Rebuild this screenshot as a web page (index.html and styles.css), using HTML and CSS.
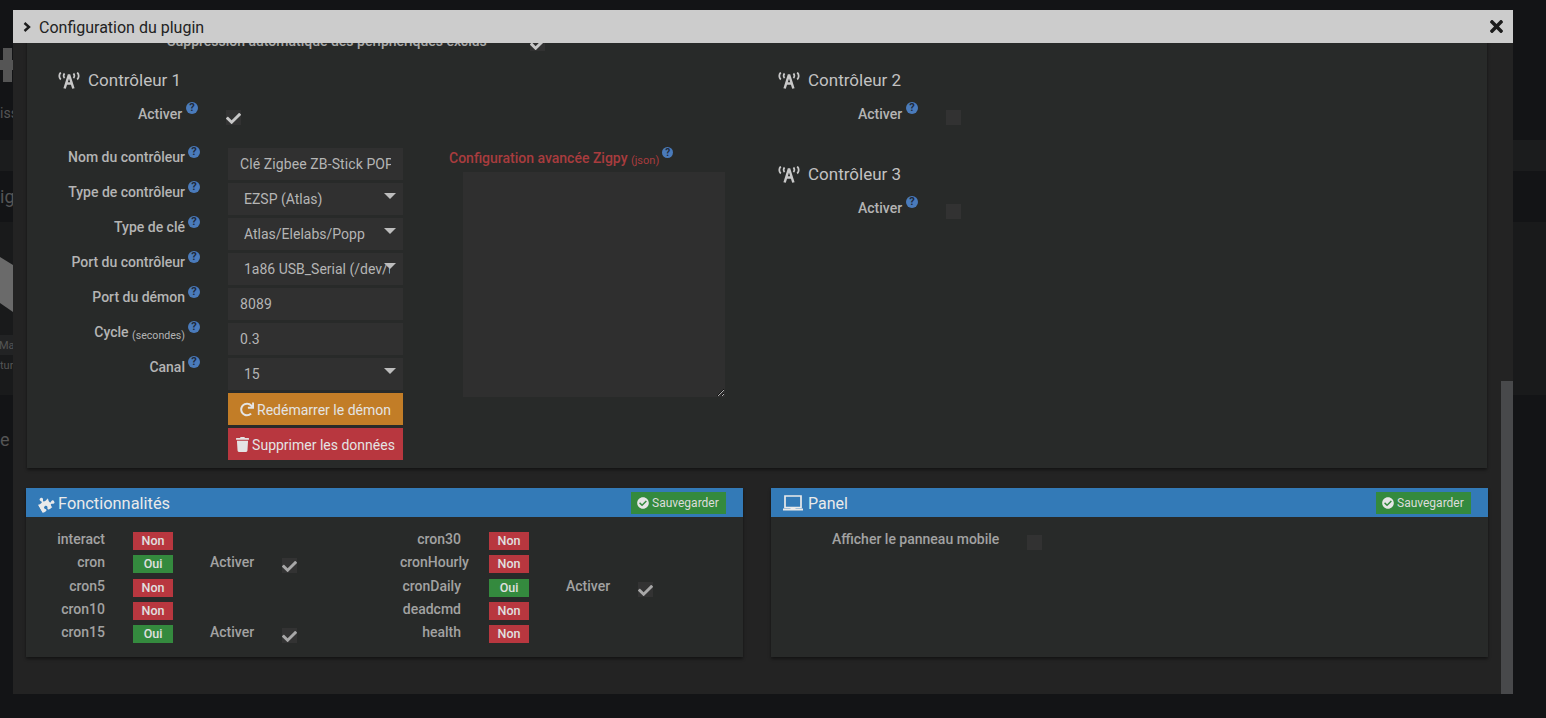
FILE: index.html
```html
<!DOCTYPE html>
<html lang="fr">
<head>
<meta charset="utf-8">
<title>Configuration du plugin</title>
<link rel="stylesheet" href="styles.css">
</head>
<body>
<svg class="defs" aria-hidden="true">
  <symbol id="i-check" viewBox="0 0 512 512"><path d="M173.898 439.404l-166.4-166.4c-9.997-9.997-9.997-26.206 0-36.204l36.203-36.204c9.997-9.998 26.207-9.998 36.204 0L192 312.69 432.095 72.596c9.997-9.997 26.207-9.997 36.204 0l36.203 36.204c9.997 9.997 9.997 26.206 0 36.204l-294.4 294.401c-9.998 9.997-26.207 9.997-36.204-.001z"/></symbol>
  <symbol id="i-ok" viewBox="0 0 512 512"><path d="M504 256c0 136.967-111.033 248-248 248S8 392.967 8 256 119.033 8 256 8s248 111.033 248 248zM227.314 387.314l184-184c6.248-6.248 6.248-16.379 0-22.627l-22.627-22.627c-6.248-6.249-16.379-6.249-22.628 0L216 308.118l-70.059-70.059c-6.248-6.248-16.379-6.248-22.628 0l-22.627 22.627c-6.248 6.248-6.248 16.379 0 22.627l104 104c6.249 6.249 16.379 6.249 22.628.001z"/></symbol>
  <symbol id="i-tower" viewBox="0 0 22 17">
    <path d="M11 2.500 6.600 16.500M11 2.500l4.400 14M8 11.500h6" fill="none" stroke="currentColor" stroke-width="2.500"/>
    <path d="M2.800 .5C.8 2.300.8 5.700 2.800 7.500M6.600 1.500C5.300 2.700 5.300 4.700 6.600 6M19.200 .5c2 1.800 2 5.200 0 7M15.400 1.500c1.300 1.200 1.300 3.200 0 4.500" fill="none" stroke="currentColor" stroke-width="1.800"/>
  </symbol>
</svg>

<div class="page">
  <svg class="bg-plus" viewBox="0 0 13 34"><path d="M3 0h9v12h1v10h-1v12H3V22H0V12h3z"/></svg>
  <div class="bg-text bg-iss">iss</div>
  <div class="bg-band bg-band-a"></div>
  <div class="bg-text bg-big bg-ig">ig</div>
  <div class="bg-band bg-band-b">
    <svg class="bg-device" viewBox="0 0 13 57"><path d="M0 0 13 8V55L0 46z"/></svg>
    <div class="bg-text bg-cap">Mai</div>
    <div class="bg-text bg-tur">tur</div>
  </div>
  <div class="bg-text bg-big bg-e">e</div>
</div>

<section class="modal">
  <header class="modal-head">
    <svg class="chev" viewBox="0 0 8 10"><path d="M1.500 1 6 5 1.500 9" fill="none" stroke="currentColor" stroke-width="2.400"/></svg>
    <span class="modal-title">Configuration du plugin</span>
    <svg class="close" viewBox="0 0 352 512"><path d="M242.72 256l100.07-100.07c12.28-12.28 12.28-32.19 0-44.48l-22.24-22.24c-12.28-12.28-32.19-12.28-44.48 0L176 189.28 75.93 89.21c-12.28-12.28-32.19-12.28-44.48 0L9.21 111.45c-12.28 12.28-12.28 32.19 0 44.48L109.28 256 9.21 356.07c-12.28 12.28-12.28 32.19 0 44.48l22.24 22.24c12.28 12.28 32.2 12.28 44.48 0L176 322.72l100.07 100.07c12.28 12.28 32.2 12.28 44.48 0l22.24-22.24c12.28-12.28 12.28-32.19 0-44.48L242.72 256z"/></svg>
  </header>
  <div class="modal-body">
    <div class="scroller">
      <div class="panel-main">
        <div class="clipped-row">
          <span class="clipped-label">Suppression automatique des périphériques exclus</span>
          <span class="check on"><svg><use href="#i-check"/></svg></span>
        </div>
        <div class="controllers">
          <div class="ctrl-left">
            <h3 class="ctrl-title"><svg class="tower"><use href="#i-tower"/></svg>Contrôleur 1</h3>
            <div class="act-row act-row-1">
              <span class="act-label">Activer</span><span class="help">?</span>
              <span class="check on"><svg><use href="#i-check"/></svg></span>
            </div>
            <div class="form">
              <div class="rows">
                <div class="row"><span class="lbl">Nom du contrôleur<span class="help">?</span></span>
                  <input class="field field-text" type="text" value="Clé Zigbee ZB-Stick POPP"></div>
                <div class="row"><span class="lbl">Type de contrôleur<span class="help">?</span></span>
                  <span class="sel"><select class="field"><option>EZSP (Atlas)</option></select></span></div>
                <div class="row"><span class="lbl">Type de clé<span class="help">?</span></span>
                  <span class="sel"><select class="field"><option>Atlas/Elelabs/Popp</option></select></span></div>
                <div class="row"><span class="lbl">Port du contrôleur<span class="help">?</span></span>
                  <span class="sel"><select class="field"><option>1a86 USB_Serial (/dev/ttyUSB0)</option></select></span></div>
                <div class="row"><span class="lbl">Port du démon<span class="help">?</span></span>
                  <input class="field field-text" type="text" value="8089"></div>
                <div class="row"><span class="lbl">Cycle <small class="lbl-small">(secondes)</small><span class="help">?</span></span>
                  <input class="field field-text" type="text" value="0.3"></div>
                <div class="row"><span class="lbl">Canal<span class="help">?</span></span>
                  <span class="sel"><select class="field"><option>15</option></select></span></div>
                <div class="row"><span class="lbl"></span>
                  <button class="btn btn-warn" type="button"><svg class="btn-ico btn-ico-redo" viewBox="0 0 512 512"><path d="M500.33 0h-47.41a12 12 0 0 0-12 12.57l4 82.76A247.42 247.42 0 0 0 256 8C119.34 8 8.05 119.53 8 256.19 7.95 393.07 119 504 256 504a247.1 247.1 0 0 0 166.18-63.91 12 12 0 0 0 .48-17.43l-34-34a12 12 0 0 0-16.38-.55A176 176 0 1 1 402.1 157.8l-101.53-4.87a12 12 0 0 0-12.57 12v47.41a12 12 0 0 0 12 12h200.33a12 12 0 0 0 12-12V12a12 12 0 0 0-12-12z"/></svg><span class="btn-text">Redémarrer le démon</span></button></div>
                <div class="row"><span class="lbl"></span>
                  <button class="btn btn-danger" type="button"><svg class="btn-ico" viewBox="0 0 448 512"><path d="M432 32H312l-9.400-18.700A24 24 0 0 0 281.100 0H166.800a23.720 23.720 0 0 0-21.400 13.300L136 32H16A16 16 0 0 0 0 48v32a16 16 0 0 0 16 16h416a16 16 0 0 0 16-16V48a16 16 0 0 0-16-16zM53.200 467a48 48 0 0 0 47.900 45h245.800a48 48 0 0 0 47.900-45L416 128H32z"/></svg><span class="btn-text">Supprimer les données</span></button></div>
              </div>
              <div class="adv">
                <div class="adv-label">Configuration avancée Zigpy <small class="adv-small">(json)</small><span class="help">?</span></div>
                <textarea class="adv-area"></textarea>
              </div>
            </div>
          </div>
          <div class="ctrl-right">
            <div class="ctrl-block">
              <h3 class="ctrl-title"><svg class="tower"><use href="#i-tower"/></svg>Contrôleur 2</h3>
              <div class="act-row">
                <span class="act-label">Activer</span><span class="help">?</span>
                <span class="check"></span>
              </div>
            </div>
            <div class="ctrl-block">
              <h3 class="ctrl-title"><svg class="tower"><use href="#i-tower"/></svg>Contrôleur 3</h3>
              <div class="act-row">
                <span class="act-label">Activer</span><span class="help">?</span>
                <span class="check"></span>
              </div>
            </div>
          </div>
        </div>
      </div>

      <div class="cards">
        <div class="card">
          <div class="card-head">
            <svg class="card-ico card-ico-puzzle" viewBox="0 0 576 512"><path d="M519.442 288.651c-41.519 0-59.5 31.593-82.058 31.593C377.409 320.244 432 144 432 144s-196.288 80-196.288-3.297c0-35.827 36.288-46.25 36.288-85.985C272 19.216 243.885 0 210.539 0c-34.654 0-66.366 18.891-66.366 56.346 0 41.364 31.711 59.277 31.711 81.75C175.885 207.719 0 166.758 0 166.758v333.237s178.635 41.047 178.635-28.662c0-22.473-40-40.107-40-81.471 0-37.456 29.25-56.346 63.577-56.346 33.673 0 61.788 19.216 61.788 54.717 0 39.735-36.288 50.158-36.288 85.985 0 60.803 129.675 25.73 181.23 25.73 0 0-34.725-120.101 25.827-120.101 35.962 0 46.423 36.152 86.308 36.152C556.712 416 576 387.99 576 354.443c0-34.199-18.962-65.792-56.558-65.792z"/></svg>
            <span class="card-title card-title-wide">Fonctionnalités</span>
            <button class="save" type="button"><svg class="save-ico"><use href="#i-ok"/></svg>Sauvegarder</button>
          </div>
          <div class="card-body">
            <div class="frow">
              <div class="fcell"><span class="fname">interact</span><span class="badge no">Non</span></div>
              <div class="fcell"><span class="fname">cron30</span><span class="badge no">Non</span></div>
            </div>
            <div class="frow frow-tall">
              <div class="fcell"><span class="fname">cron</span><span class="badge yes">Oui</span><span class="fact">Activer</span><span class="check on dim"><svg><use href="#i-check"/></svg></span></div>
              <div class="fcell"><span class="fname">cronHourly</span><span class="badge no">Non</span></div>
            </div>
            <div class="frow">
              <div class="fcell"><span class="fname">cron5</span><span class="badge no">Non</span></div>
              <div class="fcell"><span class="fname">cronDaily</span><span class="badge yes">Oui</span><span class="fact">Activer</span><span class="check on dim"><svg><use href="#i-check"/></svg></span></div>
            </div>
            <div class="frow">
              <div class="fcell"><span class="fname">cron10</span><span class="badge no">Non</span></div>
              <div class="fcell"><span class="fname">deadcmd</span><span class="badge no">Non</span></div>
            </div>
            <div class="frow">
              <div class="fcell"><span class="fname">cron15</span><span class="badge yes">Oui</span><span class="fact">Activer</span><span class="check on dim"><svg><use href="#i-check"/></svg></span></div>
              <div class="fcell"><span class="fname">health</span><span class="badge no">Non</span></div>
            </div>
          </div>
        </div>
        <div class="card">
          <div class="card-head">
            <svg class="card-ico card-ico-laptop" viewBox="0 0 20 16"><path d="M2 1h16v11.500H2z" fill="none" stroke="currentColor" stroke-width="1.700"/><path d="M0 13.500h7.500v-1.500h5v1.500H20V15.500H0z"/></svg>
            <span class="card-title">Panel</span>
            <button class="save" type="button"><svg class="save-ico"><use href="#i-ok"/></svg>Sauvegarder</button>
          </div>
          <div class="card-body">
            <div class="mobile-row">
              <span class="mobile-label">Afficher le panneau mobile</span>
              <span class="check"></span>
            </div>
          </div>
        </div>
      </div>
    </div>
    <div class="track"><div class="thumb"></div></div>
  </div>
</section>
</body>
</html>
```

FILE: styles.css
```css
* { box-sizing: border-box; }
html, body { margin: 0; height: 100%; }
body {
  background: #131416;
  font-family: Roboto, "Liberation Sans", sans-serif;
  font-size: 14px;
  overflow: hidden;
  position: relative;
}
.defs { display: none; }

/* dimmed page behind the dialog */
.page { height: 718px; overflow: hidden; padding-top: 48px; color: #555; }
.bg-plus { display: block; width: 13px; height: 34px; fill: #555; }
.bg-text { line-height: 18px; white-space: nowrap; color: #555; }
.bg-iss { margin-top: 22px; }
.bg-big { font-size: 18px; line-height: 22px; }
.bg-band { background: #1b1c1d; }
.bg-band-a { height: 31px; margin-top: 18px; }
.bg-ig { height: 51px; padding-top: 15px; }
.bg-band-b { height: 173px; padding-top: 35px; background: #191a1b; }
.bg-device { display: block; width: 13px; height: 57px; fill: #6a6a6a; }
.bg-cap { width: 13px; margin-top: 21px; background: #222324; height: 20px; padding-top: 1px; font-size: 11px; line-height: 20px; text-indent: -1px; }
.bg-tur { margin-top: 0; font-size: 11px; line-height: 22px; }
.bg-e { margin-top: 34px; }

/* dialog */
.modal {
  position: absolute;
  left: 13px;
  top: 10px;
  width: 1500px;
  height: 684px;
  background: #232323;
  display: flex;
  flex-direction: column;
}
.modal-head {
  height: 33px;
  flex: none;
  background: #cccccc;
  color: #1c1c1c;
  display: flex;
  align-items: center;
  padding: 0 10px;
}
.chev { width: 8px; height: 10px; margin-right: 8px; }
.modal-title { font-size: 16px; color: #222; flex: 1; padding-top: 2px; }
.close { width: 13px; height: 19px; fill: #1c1c1c; }
.modal-body { flex: 1; display: flex; min-height: 0; }
.scroller { flex: 1; overflow: hidden; padding: 0 13px; min-width: 0; }
.track { width: 12px; flex: none; display: flex; flex-direction: column; justify-content: flex-end; }
.thumb { height: 313px; background: #48494b; }

/* main panel */
.panel-main {
  margin: -10px 1px 0;
  height: 435px;
  background: #282a29;
  box-shadow: 0 2px 3px rgba(0, 0, 0, .45);
}
.clipped-row { display: flex; height: 18px; padding-left: 140px; color: #aaa; font-weight: 500; line-height: 16px; }
.clipped-label { width: 363px; }
.clipped-row .check { margin-top: 3px; }
.controllers { display: flex; margin-top: 18px; }
.ctrl-left { width: 720px; flex: none; padding-bottom: 8px; }
.ctrl-right { flex: 1; }
.ctrl-block { height: 94px; }
.ctrl-title {
  margin: 0 0 0 31px;
  height: 22px;
  display: flex;
  align-items: center;
  font-size: 17px;
  font-weight: 400;
  line-height: 22px;
  color: #c2c2c2;
}
.tower { width: 22px; height: 17px; color: #c8c8c8; margin-right: 8px; flex: none; }
.act-row { height: 19px; margin-top: 14px; display: flex; padding-left: 111px; line-height: 18px; }
.act-label { font-weight: 500; color: #b4b4b4; width: 44px; white-space: nowrap; }
.act-row .help { margin: -3px 0 0 4px; }
.act-row .check { margin: 5px 0 0 28px; }
.help {
  display: inline-block;
  flex: none;
  width: 12px;
  height: 12px;
  border-radius: 50%;
  background: #4a7bbb;
  color: #1f2a3a;
  font-size: 11px;
  font-weight: 700;
  line-height: 12px;
  text-align: center;
}
.check {
  display: block;
  position: relative;
  width: 15px;
  height: 15px;
  background: #323232;
  flex: none;
}
.check svg { position: absolute; left: 0; top: 1px; width: 15px; height: 15px; fill: #c8c8c8; }
.check.dim { background: #333; }
.check.dim svg { fill: #a8a8a8; }

.form { display: flex; margin-top: 24px; }
.rows { width: 376px; flex: none; }
.row { display: flex; height: 32px; margin-bottom: 3px; }
.lbl {
  width: 173px;
  flex: none;
  margin-right: 28px;
  display: flex;
  justify-content: flex-end;
  white-space: pre;
  font-weight: 500;
  line-height: 18px;
  color: #b4b4b4;
}
.lbl .help { margin: -2px 0 0 3px; }
.lbl-small { font-size: 10.6px; font-weight: 400; margin-top: 4px; }
.field {
  display: block;
  width: 175px;
  height: 32px;
  background: #303030;
  border: 0;
  outline: 0;
  border-radius: 0;
  color: #b5b5b5;
  font: 400 14px Roboto, "Liberation Sans", sans-serif;
  padding: 0 12px;
}
.field-text { letter-spacing: .1px; }
select.field { appearance: none; padding: 0 13px 0 16px; }
.sel { position: relative; display: block; width: 175px; height: 32px; }
.sel::after {
  content: "";
  position: absolute;
  left: 156px;
  top: 10px;
  border-left: 6px solid transparent;
  border-right: 6px solid transparent;
  border-top: 6px solid #bdbdbd;
}
.btn {
  width: 175px;
  height: 32px;
  border: 0;
  padding: 0;
  color: #e4e4e4;
  font: 400 14px Roboto, "Liberation Sans", sans-serif;
  display: flex;
  align-items: center;
  justify-content: center;
}
.btn-text { padding-top: 2px; }
.btn-warn { background: #c27d27; }
.btn-danger { background: #b8373f; }
.btn-ico { width: 13px; height: 15px; fill: #e4e4e4; margin-right: 3px; margin-top: 1px; flex: none; }
.btn-ico-redo { width: 14px; }
.adv { margin-left: 46px; }
.adv-label { height: 24px; display: flex; color: #a83c3e; font-weight: 500; line-height: 20px; white-space: pre; }
.adv-small { font-size: 11px; font-weight: 400; margin-top: 3px; }
.adv-label .help { margin: -1px 0 0 3px; width: 11px; height: 11px; line-height: 11px; font-size: 10px; }
.adv-area {
  display: block;
  margin-left: 14px;
  width: 262px;
  height: 225px;
  background: #2f2f2f;
  border: 0;
  outline: 0;
  border-radius: 0;
  color: #bbb;
}

/* bottom cards */
.cards { display: flex; gap: 28px; margin-top: 20px; }
.card { width: 717px; flex: none; height: 169px; background: #282a29; box-shadow: 0 2px 3px rgba(0, 0, 0, .45); }
.card-head {
  height: 29px;
  background: #337ab7;
  color: #eaeaea;
  display: flex;
  align-items: center;
  padding: 0 17px 0 12px;
}
.card-ico { width: 16px; height: 16px; fill: #eaeaea; margin-right: 4px; flex: none; }
.card-ico-puzzle { transform: rotate(-30deg); }
.card-ico-laptop { width: 20px; margin-right: 5px; margin-top: 1px; }
.card-title { font-size: 16px; flex: 1; padding-top: 2px; }
.card-title-wide { font-size: 16.4px; }
.save {
  height: 22px;
  width: 95px;
  flex: none;
  margin-top: 1px;
  border: 0;
  padding: 0 0 0 6px;
  background: #348a3e;
  color: #dcdcdc;
  font: 400 12px Roboto, "Liberation Sans", sans-serif;
  display: flex;
  align-items: center;
}
.save-ico { width: 12px; height: 12px; fill: #e6e6e6; margin-right: 3px; }
.card-body { padding-top: 15px; }
.frow { display: flex; height: 23px; }
.frow-tall { height: 24px; }
.fcell { width: 356px; flex: none; display: flex; }
.fname { width: 79px; padding-left: 18px; text-align: right; line-height: 14px; color: #a2a2a2; font-weight: 500; white-space: nowrap; flex: none; }
.badge {
  width: 40px;
  height: 18px;
  margin-left: 28px;
  flex: none;
  color: #e0e0e0;
  font-size: 12.5px;
  font-weight: 500;
  line-height: 18px;
  text-align: center;
}
.no { background: #b8373f; }
.yes { background: #348a3e; }
.fact { width: 72px; margin-left: 37px; line-height: 14px; color: #a2a2a2; font-weight: 500; flex: none; }
.fcell .check { margin-top: 3px; }
.mobile-row { display: flex; padding-left: 61px; }
.mobile-label { width: 195px; line-height: 14px; color: #a2a2a2; font-weight: 500; flex: none; }
.mobile-row .check { margin-top: 3px; }
```
